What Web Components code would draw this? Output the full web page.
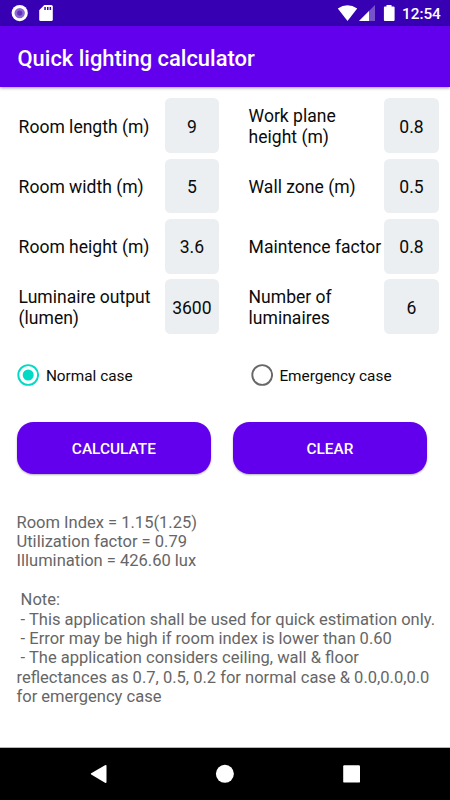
<!DOCTYPE html>
<html lang="en">
<head>
<meta charset="utf-8">
<title>Quick lighting calculator</title>
<style>
html, body { margin: 0; height: 100%; background: #fff; }
body { font-family: Roboto, sans-serif; color: #0b0b0b; overflow: hidden; }
</style>
</head>
<body>
<lighting-app></lighting-app>
<script>
function define(name, html) {
  const template = document.createElement('template');
  template.innerHTML = html;
  customElements.define(name, class extends HTMLElement {
    constructor() {
      super();
      this.attachShadow({ mode: 'open' }).append(template.content.cloneNode(true));
    }
  });
}

define('status-bar', `
<style>
:host { display: flex; align-items: center; height: 26px; box-sizing: border-box; background: #3700b3; color: #fff; padding: 0 9px 0 11px; flex: none; }
svg { display: block; }
.gap { flex: 1; }
.time { width: 39px; font-size: 15.3px; font-weight: 500; line-height: 26px; padding-top: 1px; }
</style>
<svg width="44" height="26" viewBox="11 0 44 26">
  <circle cx="19.7" cy="13.1" r="8.1" fill="#fff"/>
  <circle cx="19.7" cy="13.1" r="5.2" fill="#8c66d4"/>
  <circle cx="19.7" cy="13.1" r="2.6" fill="#6030bd"/>
  <path d="M44.300 5h7q1.500 0 1.500 1.500v13q0 1.500-1.500 1.500h-10.600q-1.500 0-1.500-1.500V10.200z" fill="#fff"/>
  <path d="M44.300 7h1.500v3h-1.500zM47 7h1.500v3H47zM49.600 7h1.500v3h-1.500z" fill="#3700b3"/>
</svg>
<span class="gap"></span>
<svg width="65" height="26" viewBox="337 0 65 26">
  <path d="M337.800 8.600Q347.500 1.800 357.200 8.600L347.500 21z" fill="#fff"/>
  <path d="M375 5v16h-16z" fill="#fff" opacity=".32"/>
  <path d="M369 11v10h-10z" fill="#fff"/>
  <path d="M386.500 5h5v1.500h2.100q1 0 1 1v12.500q0 1-1 1h-8.700q-1 0-1-1v-12.500q0-1 1-1h1.600z" fill="#fff"/>
</svg>
<span class="time"><slot></slot></span>`);

define('app-bar', `
<style>
:host { display: flex; align-items: center; flex: none; height: 61px; box-sizing: border-box; padding: 3px 17.500px 0; background: #6200ee; color: #fff; font-size: 21.950px; font-weight: 500; box-shadow: 0 1px 3px rgba(0,0,0,.4); position: relative; }
</style><slot></slot>`);

define('number-field', `
<style>
:host { display: flex; align-items: center; justify-content: space-between; height: 55px; font-size: 17.550px; line-height: 20.500px; }
.value { display: flex; align-items: center; justify-content: center; flex: none; width: 54.500px; height: 54.500px; border-radius: 5.500px; background: #eceff1; padding-top: 2.400px; box-sizing: border-box; }
.label { padding-top: 2.400px; white-space: nowrap; }
</style>
<span class="label"><slot></slot></span><span class="value"><slot name="value"></slot></span>`);

define('field-grid', `
<style>
:host { display: grid; grid-template-columns: 200.500px 190.200px; column-gap: 29.500px; row-gap: 5.300px; padding: 11.200px 0 0 18.600px; }
</style><slot></slot>`);

define('radio-option', `
<style>
:host { display: flex; align-items: center; gap: 6.500px; font-size: 15.350px; line-height: 22px; }
svg { display: block; color: #686868; }
.dot { display: none; }
:host([checked]) svg { color: #03dac5; }
:host([checked]) .dot { display: block; }
span { padding-top: 2px; }
</style>
<svg width="22" height="22" viewBox="0 0 22 22"><circle cx="11.200" cy="11" r="9.900" fill="none" stroke="currentColor" stroke-width="1.900"/><circle class="dot" cx="11.200" cy="11" r="5.500" fill="currentColor"/></svg>
<span><slot></slot></span>`);

define('radio-row', `
<style>
:host { display: grid; grid-template-columns: 233.500px auto; justify-content: start; padding: 29.400px 0 0 17.400px; }
</style><slot></slot>`);

define('action-button', `
<style>
:host { display: flex; align-items: center; justify-content: center; height: 52px; box-sizing: border-box; padding-top: 2px; border-radius: 16.500px; background: #6200ee; color: #fff; font-size: 15.400px; font-weight: 500; box-shadow: 0 1px 2px rgba(0,0,0,.3); }
</style><slot></slot>`);

define('button-row', `
<style>
:host { display: grid; grid-template-columns: 194.300px 194.300px; column-gap: 21.800px; padding: 34.200px 0 0 16.700px; }
</style><slot></slot>`);

define('result-text', `
<style>
:host { display: block; padding: 39px 0 0 16.500px; font-size: 16.530px; line-height: 19.380px; color: #666; }
div { white-space: pre; }
</style><div><slot></slot></div>`);

define('nav-bar', `
<style>
:host { display: block; flex: none; height: 53px; box-sizing: border-box; border-top: 1px solid #b5b5b5; background: #000; margin-top: auto; }
svg { display: block; }
</style>
<svg width="450" height="52" viewBox="0 748 450 52" fill="#fff">
  <path d="M91.200 773.200 Q90.300 773.800 91.200 774.400 L105 782.700 Q106.500 783.400 106.500 782 V765.800 Q106.500 764.400 105 765.200z"/>
  <circle cx="224.900" cy="773.800" r="9"/>
  <rect x="343.200" y="765.300" width="16.800" height="17.300" rx="1.200"/>
</svg>`);

define('lighting-app', `
<style>
:host { display: flex; flex-direction: column; width: 450px; height: 800px; }
</style>
<status-bar>12:54</status-bar>
<app-bar>Quick lighting calculator</app-bar>
<field-grid>
  <number-field>Room length (m)<span slot="value">9</span></number-field>
  <number-field>Work plane<br>height (m)<span slot="value">0.8</span></number-field>
  <number-field>Room width (m)<span slot="value">5</span></number-field>
  <number-field>Wall zone (m)<span slot="value">0.5</span></number-field>
  <number-field>Room height (m)<span slot="value">3.6</span></number-field>
  <number-field>Maintence factor<span slot="value">0.8</span></number-field>
  <number-field>Luminaire output<br>(lumen)<span slot="value">3600</span></number-field>
  <number-field>Number of<br>luminaires<span slot="value">6</span></number-field>
</field-grid>
<radio-row>
  <radio-option checked>Normal case</radio-option>
  <radio-option>Emergency case</radio-option>
</radio-row>
<button-row>
  <action-button>CALCULATE</action-button>
  <action-button>CLEAR</action-button>
</button-row>
<result-text>Room Index = 1.15(1.25)
Utilization factor = 0.79
Illumination = 426.60 lux

 Note:
 - This application shall be used for quick estimation only.
 - Error may be high if room index is lower than 0.60
 - The application considers ceiling, wall &amp; floor
reflectances as 0.7, 0.5, 0.2 for normal case &amp; 0.0,0.0,0.0
for emergency case</result-text>
<nav-bar></nav-bar>`);
</script>
</body>
</html>
